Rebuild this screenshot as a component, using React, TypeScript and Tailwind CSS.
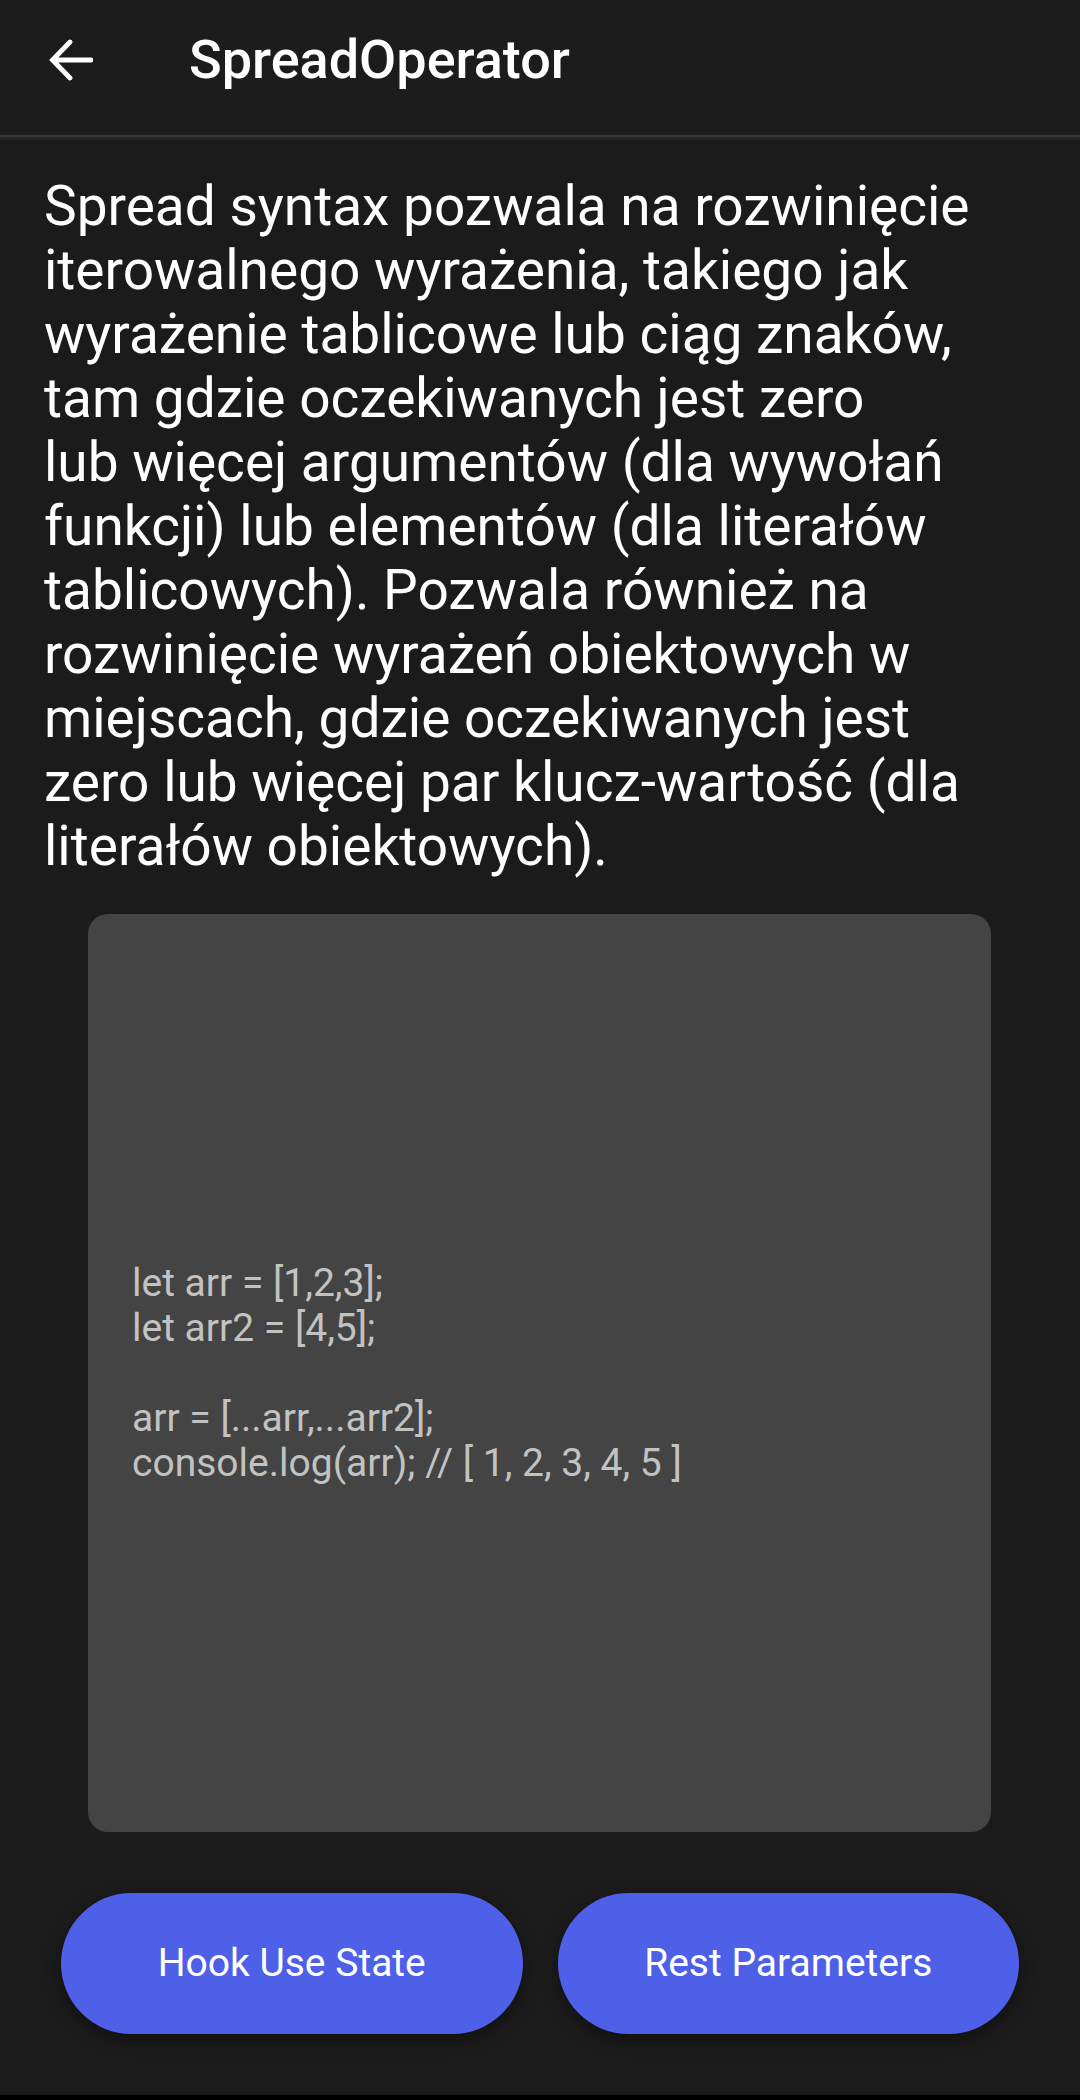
import React from 'react'

const paragraph = [
  "Spread syntax pozwala na rozwinięcie",
  "iterowalnego wyrażenia, takiego jak",
  "wyrażenie tablicowe lub ciąg znaków,",
  "tam gdzie oczekiwanych jest zero",
  "lub więcej argumentów (dla wywołań",
  "funkcji) lub elementów (dla literałów",
  "tablicowych). Pozwala również na",
  "rozwinięcie wyrażeń obiektowych w",
  "miejscach, gdzie oczekiwanych jest",
  "zero lub więcej par klucz-wartość (dla",
  "literałów obiektowych).",
];

const code = [
  "let arr = [1,2,3];",
  "let arr2 = [4,5];",
  "",
  "arr = [...arr,...arr2];",
  "console.log(arr); // [ 1, 2, 3, 4, 5 ]",
];

function BackArrow() {
  return (
    <svg width="44" height="44" viewBox="0 0 44 44" fill="none">
      <path
        d="M42 22H5M21 4L3.5 22L21 40"
        stroke="white"
        strokeWidth="4.8"
        strokeLinecap="round"
        strokeLinejoin="miter"
      />
    </svg>
  );
}

function NavButton({ label }: { label: string }) {
  return (
    <button className="h-[141px] flex-1 rounded-full bg-[#4e5fe8] text-[39px] text-white shadow-[0_6px_16px_rgba(0,0,0,0.35)]">
      {label}
    </button>
  );
}

export default function App() {
  return (
    <div
      className="w-[1080px] h-[2100px] bg-[#1b1b1b] flex flex-col"
      style={{ fontFamily: 'Roboto, "Noto Sans", sans-serif' }}
    >
      <header className="h-[135px] pb-[16px] flex items-center bg-[#1c1c1c]">
        <div className="ml-[49px] w-[44px] flex items-center">
          <BackArrow />
        </div>
        <h1 className="ml-[96px] text-[54px] leading-[64px] font-medium text-white">
          SpreadOperator
        </h1>
      </header>
      <div className="h-[2px] bg-[#363636]" />
      <div className="h-[5px] bg-gradient-to-b from-[#2a2a2a] to-[#1b1b1b]" />

      <main className="flex-1 flex flex-col">
        <p className="mt-[32px] px-[44px] text-[55px] leading-[64px] text-white">
          {paragraph.map((line, i) => (
            <span key={i} className="block whitespace-nowrap">
              {line}
            </span>
          ))}
        </p>

        <div className="mt-[36px] ml-[88px] w-[903px] h-[918px] rounded-[20px] bg-[#444444] flex flex-col justify-center px-[44px]">
          {code.map((line, i) => (
            <div key={i} className="h-[45px] text-[39px] leading-[45px] text-[#c2c2c2] whitespace-pre">
              {line}
            </div>
          ))}
        </div>

        <div className="mt-[61px] ml-[61px] w-[958px] flex gap-[35px]">
          <NavButton label="Hook Use State" />
          <NavButton label="Rest Parameters" />
        </div>
      </main>
      <div className="h-[5px] bg-black" />
    </div>
  );
}
